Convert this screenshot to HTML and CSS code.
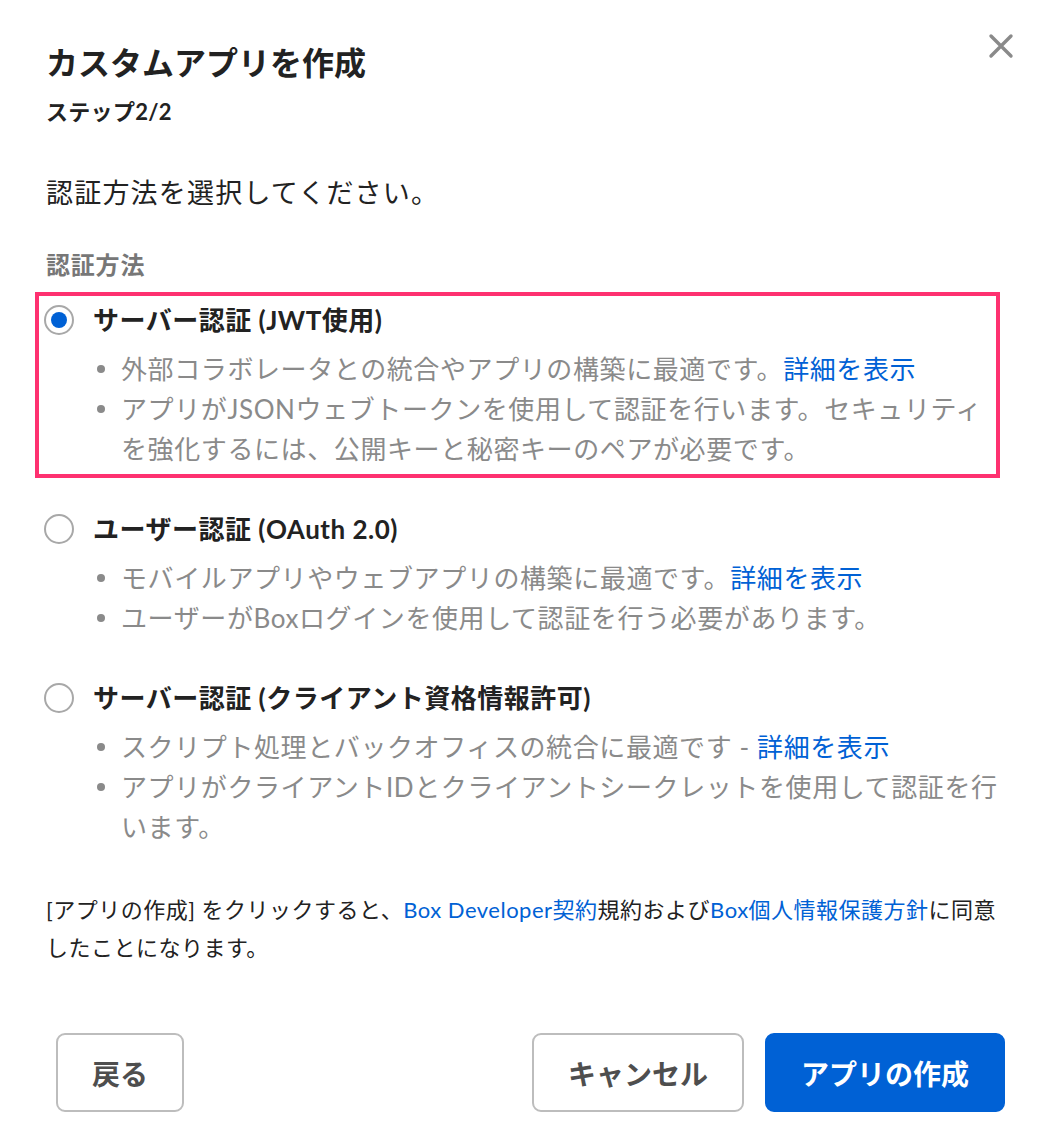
FILE: index.html
```html
<!DOCTYPE html>
<html lang="ja">
<head>
<meta charset="UTF-8">
<meta name="viewport" content="width=device-width, initial-scale=1.0">
<title>カスタムアプリを作成</title>
<link rel="stylesheet" href="styles.css">
</head>
<body>

<div class="modal">
    <div class="modal-header">
        <h1 class="title">カスタムアプリを作成</h1>
        <button class="close-button" aria-label="閉じる">
            <svg width="26" height="26" viewBox="0 0 26 26">
                <path d="M3 3 L23 23 M23 3 L3 23" stroke="#8a8a8a" stroke-width="3.4" stroke-linecap="round" fill="none"/>
            </svg>
        </button>
    </div>
    <div class="step">ステップ2/2</div>

    <p class="intro">認証方法を選択してください。</p>

    <div class="group-label">認証方法</div>

    <div class="options">
        <label class="option option-selected">
            <input type="radio" name="auth" value="jwt" checked>
            <span class="radio"></span>
            <div class="option-body">
                <div class="option-title">サーバー認証 (JWT使用)</div>
                <ul class="bullets">
                    <li>外部コラボレータとの統合やアプリの構築に最適です。<a href="#">詳細を表示</a></li>
                    <li>アプリがJSONウェブトークンを使用して認証を行います。セキュリティを強化するには、公開キーと秘密キーのペアが必要です。</li>
                </ul>
            </div>
            <span class="highlight"></span>
        </label>

        <label class="option">
            <input type="radio" name="auth" value="oauth">
            <span class="radio"></span>
            <div class="option-body">
                <div class="option-title">ユーザー認証 (OAuth 2.0)</div>
                <ul class="bullets">
                    <li>モバイルアプリやウェブアプリの構築に最適です。<a href="#">詳細を表示</a></li>
                    <li>ユーザーがBoxログインを使用して認証を行う必要があります。</li>
                </ul>
            </div>
        </label>

        <label class="option">
            <input type="radio" name="auth" value="ccg">
            <span class="radio"></span>
            <div class="option-body">
                <div class="option-title">サーバー認証 (クライアント資格情報許可)</div>
                <ul class="bullets">
                    <li>スクリプト処理とバックオフィスの統合に最適です - <a href="#">詳細を表示</a></li>
                    <li>アプリがクライアントIDとクライアントシークレットを使用して認証を行います。</li>
                </ul>
            </div>
        </label>
    </div>

    <p class="terms">[アプリの作成] をクリックすると、<a href="#">Box Developer契約</a>規約および<a href="#">Box個人情報保護方針</a>に同意したことになります。</p>

    <div class="actions">
        <button class="btn">戻る</button>
        <div class="actions-right">
            <button class="btn">キャンセル</button>
            <button class="btn btn-primary">アプリの作成</button>
        </div>
    </div>
</div>

</body>
</html>
```

FILE: styles.css
```css
body {
    margin: 0;
    padding: 0;
    background-color: white;
    font-family: "Lato", "Noto Sans CJK JP", sans-serif;
    color: #222;
}
.modal {
    width: 1054px;
    box-sizing: border-box;
    padding: 33px 38px 0 46px;
}
.modal-header {
    display: flex;
    justify-content: space-between;
    align-items: flex-start;
}
.title {
    margin: 10px 0 0 0;
    font-size: 32px;
    line-height: 40px;
    font-weight: bold;
}
.close-button {
    background: none;
    border: none;
    padding: 0;
    width: 26px;
    height: 26px;
    margin-right: 2px;
    cursor: pointer;
}
.step {
    margin-top: 15px;
    font-size: 22px;
    line-height: 28px;
    font-weight: bold;
    letter-spacing: 0.3px;
}
.intro {
    margin: 49px 0 0 0;
    font-size: 27px;
    line-height: 36px;
    letter-spacing: 1.2px;
}
.group-label {
    margin-top: 38px;
    font-size: 24px;
    line-height: 32px;
    font-weight: bold;
    color: #777;
    letter-spacing: 0.8px;
}
.options {
    margin-top: 21px;
    display: flex;
    flex-direction: column;
    gap: 42px;
    padding-right: 8px;
}
.option {
    position: relative;
    display: flex;
    gap: 19px;
    cursor: pointer;
}
.option input {
    display: none;
}
.radio {
    flex: none;
    width: 26px;
    height: 26px;
    margin-top: 3px;
    margin-left: -2px;
    border: 2px solid #a8a8a8;
    border-radius: 50%;
    display: flex;
    align-items: center;
    justify-content: center;
}
.option input:checked + .radio::after {
    content: "";
    width: 16px;
    height: 16px;
    border-radius: 50%;
    background-color: #0061d5;
}
.option-title {
    font-size: 26px;
    line-height: 36px;
    font-weight: bold;
    color: #222;
    letter-spacing: 0.5px;
}
.bullets {
    list-style: none;
    margin: 11px 0 0 0;
    padding: 0 0 0 28px;
}
.bullets li {
    position: relative;
    font-size: 26px;
    line-height: 40px;
    color: #8a8a8a;
    letter-spacing: 0.6px;
}
.bullets li::before {
    content: "";
    position: absolute;
    left: -24px;
    top: 16px;
    width: 8px;
    height: 8px;
    border-radius: 50%;
    background-color: #8a8a8a;
}
a {
    color: #0061d5;
    text-decoration: none;
}
/* 選択中の項目を囲む赤枠 */
.highlight {
    position: absolute;
    left: -11px;
    top: -10px;
    right: 8px;
    bottom: -9px;
    border: 4px solid #fe3170;
    pointer-events: none;
}
.terms {
    margin: 44px 0 0 0;
    font-size: 22px;
    line-height: 38px;
    color: #222;
    letter-spacing: 0.5px;
}
.actions {
    margin-top: 66px;
    display: flex;
    justify-content: space-between;
    padding: 0 11px 0 10px;
}
.actions-right {
    display: flex;
    gap: 21px;
}
.btn {
    height: 79px;
    padding: 0 34px;
    font-family: "Lato", "Noto Sans CJK JP", sans-serif;
    font-size: 28px;
    font-weight: bold;
    color: #4e4e4e;
    background-color: white;
    border: 2px solid #bdbdbd;
    border-radius: 9px;
    cursor: pointer;
}
.btn-primary {
    background-color: #0061d5;
    border-color: #0061d5;
    color: white;
}
```
